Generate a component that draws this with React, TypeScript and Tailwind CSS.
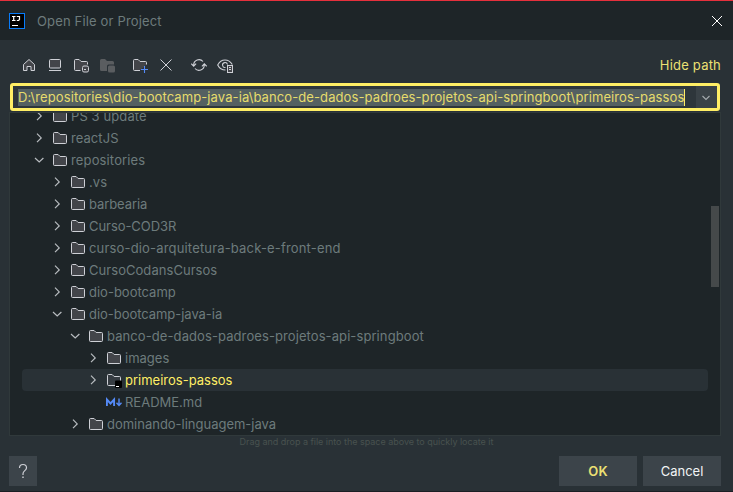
import type { ReactNode } from "react";

const FOLDER = "M1.5 3.5a1 1 0 0 1 1-1h3.6l2 2h5.4a1 1 0 0 1 1 1v7a1 1 0 0 1-1 1h-11a1 1 0 0 1-1-1z";

function Icon({ children, className = "" }: { children: ReactNode; className?: string }) {
  return (
    <svg viewBox="0 0 16 16" fill="none" className={`size-4 shrink-0 ${className}`}>
      {children}
    </svg>
  );
}

function Chevron({ open }: { open: boolean }) {
  return (
    <Icon>
      <path d={open ? "M4 6l4.200 4L12.400 6" : "M6 3.700l4.200 4.200L6 12.100"} stroke="#b9bdc1" strokeWidth="1.2" />
    </Icon>
  );
}

function FolderIcon({ module = false }: { module?: boolean }) {
  return (
    <Icon>
      <path d={FOLDER} fill={module ? "#363c42" : "#43454a"} stroke="#ced0d6" />
      {module && (
        <>
          <rect x="9" y="8.500" width="7" height="7.500" rx="1" fill="#000" />
          <path d="M10 14.500h3" stroke="#fff" />
        </>
      )}
    </Icon>
  );
}

function MarkdownIcon() {
  return (
    <Icon>
      <path d="M.9 12V5.500L4.500 9.500 8.100 5.500V12" stroke="#548af7" strokeWidth="1.900" />
      <path d="M13 4.500v7M10.500 8.800l2.500 2.700 2.500-2.700" stroke="#548af7" strokeWidth="1.400" />
    </Icon>
  );
}

type Entry = { name: string; indent: string; tracking: string; kind?: "open" | "file" | "selected" };

const L0 = "pl-[21px]";
const L1 = "pl-[39px]";
const L2 = "pl-[57px]";
const L3 = "pl-[75px]";

const entries: Entry[] = [
  { name: "PS 3 update", indent: L0, tracking: "tracking-[0.1px]" },
  { name: "reactJS", indent: L0, tracking: "tracking-[0.06px]" },
  { name: "repositories", indent: L0, tracking: "tracking-[0.14px]", kind: "open" },
  { name: ".vs", indent: L1, tracking: "tracking-[0.1px]" },
  { name: "barbearia", indent: L1, tracking: "tracking-[-0.08px]" },
  { name: "Curso-COD3R", indent: L1, tracking: "tracking-[-0.06px]" },
  { name: "curso-dio-arquitetura-back-e-front-end", indent: L1, tracking: "tracking-[0.17px]" },
  { name: "CursoCodansCursos", indent: L1, tracking: "tracking-[0.05px]" },
  { name: "dio-bootcamp", indent: L1, tracking: "tracking-[0px]" },
  { name: "dio-bootcamp-java-ia", indent: L1, tracking: "tracking-[-0.04px]", kind: "open" },
  { name: "banco-de-dados-padroes-projetos-api-springboot", indent: L2, tracking: "tracking-[0.09px]", kind: "open" },
  { name: "images", indent: L3, tracking: "tracking-[0px]" },
  { name: "primeiros-passos", indent: "pl-[63px]", tracking: "tracking-[0px]", kind: "selected" },
  { name: "README.md", indent: L3, tracking: "tracking-[0px]", kind: "file" },
  { name: "dominando-linguagem-java", indent: L2, tracking: "tracking-[-0.01px]" },
];

function Row({ name, indent, tracking, kind }: Entry) {
  const selected = kind === "selected";
  return (
    <div
      className={`flex h-[22px] shrink-0 items-center ${indent} ${
        selected ? "ml-3 mr-3 rounded bg-[#293136] text-[#ffee65]" : "text-[#6d7b7c]"
      }`}
    >
      {kind === "file" ? <span className="w-4" /> : <Chevron open={kind === "open"} />}
      <span className="ml-[5px] mr-[3px]">{kind === "file" ? <MarkdownIcon /> : <FolderIcon module={selected} />}</span>
      <span className={`whitespace-nowrap ${tracking}`}>{name}</span>
    </div>
  );
}

function Toolbar() {
  return (
    <div className="flex h-[43px] items-center pl-[21px] pr-3 pt-[7px]">
      <Icon>
        <path d="M2.500 7.500L8 2.500l5.500 5v6h-3.500V9.500H6v4H2.500z" fill="#43454a" stroke="#ced0d6" strokeLinejoin="round" />
      </Icon>
      <Icon className="ml-[10px]">
        <rect x="2.500" y="2.500" width="11" height="8.500" rx="1" fill="#43454a" stroke="#ced0d6" />
        <path d="M2 13.500h12" stroke="#ced0d6" />
      </Icon>
      <Icon className="ml-[10px]">
        <path d="M7.500 13.500h-5a1 1 0 0 1-1-1v-9a1 1 0 0 1 1-1h3.600l2 2h5.400a1 1 0 0 1 1 1v2" fill="#43454a" stroke="#ced0d6" />
        <rect x="9.500" y="9" width="6" height="6" rx="1.500" fill="#43454a" stroke="#ced0d6" />
        <path d="M11 12.500h2" stroke="#ced0d6" />
      </Icon>
      <Icon className="ml-[10px]">
        <path d="M1 3.500A1.500 1.500 0 0 1 2.500 2H6l2 2h5.500A1.500 1.500 0 0 1 15 5.500V7.500H9.500A1.500 1.500 0 0 0 8 9V14H2.500A1.500 1.500 0 0 1 1 12.500z" fill="#5a5d60" />
        <rect x="9" y="8.500" width="7" height="7" rx="1.500" fill="#5a5d60" />
      </Icon>
      <Icon className="ml-[17px]">
        <path d="M8 13.500H2.500a1 1 0 0 1-1-1v-9a1 1 0 0 1 1-1h3.600l2 2h5.400a1 1 0 0 1 1 1v2" fill="#43454a" stroke="#ced0d6" />
        <path d="M12.500 9v7M9 12.500h7" stroke="#548af7" strokeWidth="1.100" />
      </Icon>
      <Icon className="ml-[10px]">
        <path d="M2.500 2.500l11 11M13.500 2.500l-11 11" stroke="#ced0d6" />
      </Icon>
      <Icon className="ml-[17px]">
        <path d="M2.700 9V8a5.300 5.300 0 0 1 9.300-3.500M13.300 7v1A5.300 5.300 0 0 1 4 11.500M.300 6.700l2.400 2.400 2.400-2.400M10.900 9.300l2.400-2.400 2.400 2.400" stroke="#ced0d6" strokeWidth="1.100" />
      </Icon>
      <Icon className="ml-[10px]">
        <path d="M8.500 13C5 13 2.200 11 .700 8 2.200 5 4.700 3 8 3s5.800 2 7.300 4.500" stroke="#ced0d6" strokeWidth="1.100" />
        <path d="M8.500 10.500A2.500 2.500 0 1 1 10.500 7.500" stroke="#ced0d6" strokeWidth="1.100" />
        <rect x="10.500" y="8.500" width="5" height="7" fill="#43454a" stroke="#ced0d6" />
        <path d="M12 10.500h2M12 12.500h2" stroke="#ced0d6" />
      </Icon>
      <span className="ml-auto text-[#ece073]">Hide path</span>
    </div>
  );
}

export default function App() {
  return (
    <div className="flex h-[492px] w-[733px] flex-col overflow-hidden border-b border-[#1b1f24] bg-[#293136] font-['Inter',sans-serif] text-[13px] leading-4 tracking-[0.2px]">
      <header className="flex h-10 shrink-0 items-center border-t border-[#e6303c] bg-[#1e2528] pl-[9px] pr-[10px]">
        <svg viewBox="0 0 16 16" className="size-4" fill="none">
          <rect x=".5" y=".5" width="15" height="15" fill="#000" stroke="#087cfa" />
          <path d="M3 3.500h3.500M4.700 3.500v4M3 7.500h3.500M7.800 3.500h2.700v3l-.900 1H7.800M3 12.500h6" stroke="#fff" strokeWidth="1.200" />
        </svg>
        <span className="ml-3 tracking-[0.16px] text-[#6d7b7c]">Open File or Project</span>
        <svg viewBox="0 0 12 12" className="ml-auto size-3" fill="none">
          <path d="M1 1l10 10M11 1L1 11" stroke="#fff" />
        </svg>
      </header>
      <Toolbar />
      <div className="ml-[10px] flex h-7 w-[710px] shrink-0 items-center rounded-[3px] border-[3px] border-[#ffee65] bg-[#2e363b] pl-[5px]">
        <span className="h-[17px] w-[667px] whitespace-nowrap border-r border-[#ffee65] bg-[#546061] tracking-[0.1px] text-[#e6dc6c]">
          D:\repositories\dio-bootcamp-java-ia\banco-de-dados-padroes-projetos-api-springboot\primeiros-passos
        </span>
        <span className="ml-auto flex h-full w-[21px] items-center justify-center bg-[#3a4247] pr-px">
          <svg viewBox="0 0 10 6" className="mt-0.5 h-1.5 w-2.5" fill="none">
            <path d="M1.500 1L5 4.500 8.500 1" stroke="#a6abae" strokeWidth="1.100" />
          </svg>
        </span>
      </div>
      <div className="mx-[9px] mt-px flex h-[324px] w-[712px] shrink-0 overflow-hidden border border-[#30393b] bg-[#1e2528]">
        <div className="-mt-2 flex min-w-0 flex-1 flex-col">
          {entries.map((entry) => (
            <Row key={entry.name} {...entry} />
          ))}
        </div>
        <div className="-ml-[9px] mr-px mt-[93px] h-[81px] w-2 bg-[#45494a]" />
      </div>
      <p className="h-5 text-center text-[9px] leading-[12px] tracking-[-0.02px] text-[#48514f]">
        Drag and drop a file into the space above to quickly locate it
      </p>
      <footer className="flex h-[30px] gap-1.5 pl-[9px] pr-3">
        <button className="mr-auto w-7 bg-[#3c444a] text-[#ced0d6]">
          <svg viewBox="0 0 28 30" className="h-[30px] w-7" fill="none">
            <path d="M10.500 12c0-2 1.300-3.500 3.500-3.500s3.500 1.300 3.500 3.200c0 2.800-3.500 3-3.500 6V19" stroke="#ced0d6" strokeWidth="1.200" />
            <path d="M14 20.500V22" stroke="#ced0d6" strokeWidth="1.400" />
          </svg>
        </button>
        <button className="w-[78px] bg-[#3c444a] font-semibold text-[#ece073]">OK</button>
        <button className="w-[78px] bg-[#3c444a] tracking-[0px] text-[#f2f4f5]">Cancel</button>
      </footer>
    </div>
  );
}
